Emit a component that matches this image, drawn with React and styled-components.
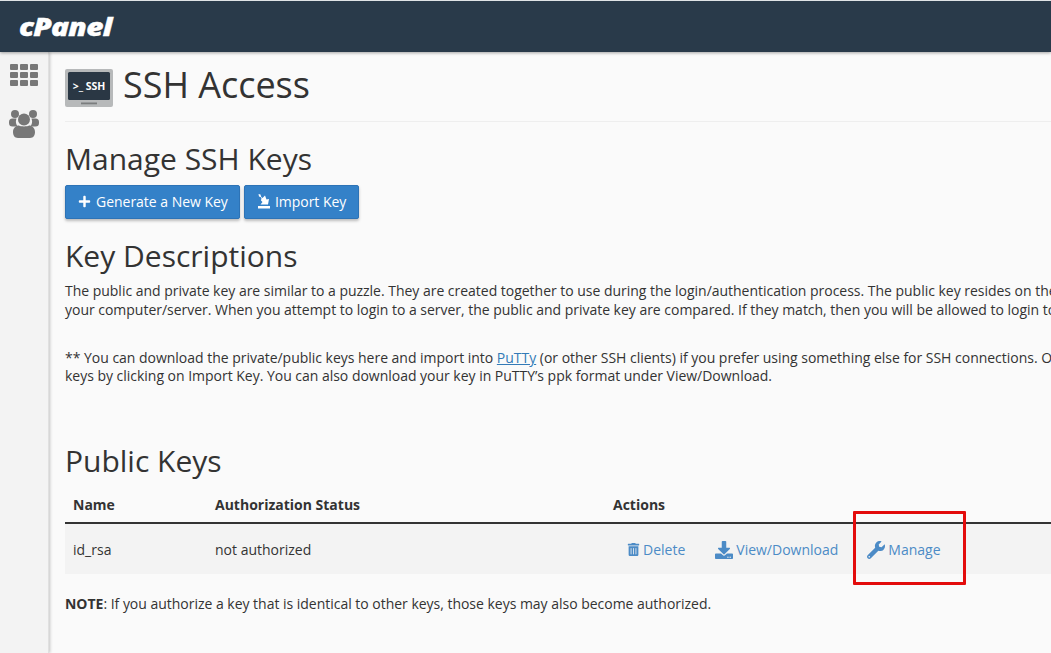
import React from "react";
import styled, { createGlobalStyle } from "styled-components";
import { FaPlus, FaTrashAlt, FaDownload, FaWrench } from "react-icons/fa";

const Global = createGlobalStyle`
  html, body { margin: 0; padding: 0; height: 100%; overflow: hidden; background: #fafafa; }
  body { font-family: "Open Sans", "Liberation Sans", sans-serif; color: #333; font-size: 14px; }
  #root { height: 100%; }
`;

const Page = styled.div`
  width: 1051px; height: 653px; display: flex; flex-direction: column; overflow: hidden; background: #fafafa;
`;
const TopBar = styled.header`
  height: 51px; flex: none; display: flex; align-items: center; padding-left: 19px;
  background: #293a4a; border-top: 1px solid #dfe3e6;
  box-shadow: 0 1px 3px rgba(0,0,0,.35); position: relative; z-index: 2;
`;
const Logo = styled.span`
  display: inline-block; transform: scaleX(1.24); transform-origin: left center;
  font-family: "Open Sans", sans-serif; font-style: italic; font-weight: 800; font-size: 24px;
  letter-spacing: -0.6px; color: #fff; line-height: 1; -webkit-text-stroke: 0.4px #fff;
`;
const Body = styled.div`display: flex; flex: 1; min-height: 0;`;
const Sidebar = styled.nav`
  width: 49px; flex: none; background: #f3f3f3; border-right: 1px solid #e0e0e0;
  box-shadow: 1px 0 3px rgba(0,0,0,.22); display: flex; flex-direction: column; align-items: center;
  padding: 12px 0 0 0; gap: 24px; box-sizing: border-box;
`;
const Main = styled.main`flex: 1; min-width: 0; padding: 17px 0 0 16px; overflow: hidden; position: relative;`;
const Title = styled.div`
  display: flex; align-items: flex-start; gap: 10px; height: 52px; border-bottom: 1px solid #eee;
`;
const TitleText = styled.h1`
  margin: -4px 0 0; font-weight: 400; font-size: 36px; line-height: 40px; color: #333; letter-spacing: -0.03px;
`;
const Section = styled.h2`
  margin: ${p => p.$top}px 0 0; font-weight: 400; font-size: 30px; line-height: 34px; color: #333;
  white-space: nowrap;
`;
const Buttons = styled.div`display: flex; gap: 4px; margin-top: 9px;`;
const Button = styled.button`
  height: 34px; display: inline-flex; align-items: center; gap: ${p => p.$gap}px;
  padding: 0 ${p => p.$right}px 2px 12px;
  background: #3481c8; border: 1px solid #2d73b6; border-radius: 2px; color: #fff;
  font: 400 14px "Open Sans", sans-serif; letter-spacing: -0.02px;
  box-shadow: 0 2px 3px rgba(0,0,0,.25);
`;
const Para = styled.p`
  margin: ${p => p.$top}px 0 0; font-size: 14px; line-height: 19px; white-space: nowrap; color: #333;
  letter-spacing: -0.02px;
`;
const TextLink = styled.a`color: #337ab7; text-decoration: underline;`;
const Table = styled.div`width: 986px; margin-top: 7px;`;
const HeadRow = styled.div`
  display: grid; grid-template-columns: 142px 398px 1fr; align-items: center; padding: 2px 0 0 8px;
  height: 35px; font-weight: 700; border-bottom: 2px solid #333;
`;
const DataRow = styled.div`
  display: grid; grid-template-columns: 142px 398px 1fr; align-items: center; padding: 1px 0 0 8px;
  height: 50px; box-sizing: border-box; background: #f3f3f3;
`;
const Actions = styled.div`display: flex; align-items: center; padding-left: 14px;`;
const Action = styled.a`
  color: #4c8bc6; display: inline-flex; align-items: center; gap: 3px; white-space: nowrap;
  margin-right: ${p => p.$gap}px;
`;
const Note = styled.p`margin: 20px 0 0; font-size: 14px; line-height: 19px; letter-spacing: -0.02px;`;
const Highlight = styled.div`
  position: absolute; left: 804px; top: 459px; width: 113px; height: 74px; box-sizing: border-box;
  border: 3px solid #e30c0c; border-radius: 1px; pointer-events: none;
`;

const SshIcon = () => (
  <svg width="48" height="38" viewBox="0 0 48 38" style={{ flex: "none" }}>
    <rect width="48" height="38" rx="2" fill="#b7b9ba" />
    <rect x="3" y="3" width="42" height="28" rx="1.5" fill="#2a3744" />
    <rect x="16" y="33.500" width="16" height="1.8" fill="#7b7d7e" />
    <text x="24" y="21" textAnchor="middle" fill="#fff" fontFamily="Open Sans" fontWeight="700" fontSize="10.500">{">_ SSH"}</text>
  </svg>
);
const GridIcon = () => (
  <svg width="28" height="22" viewBox="0 0 28 22" fill="#777">
    {[0, 8, 16].flatMap(y => [0, 10, 20].map(x => (
      <rect key={`${x}-${y}`} x={x} y={y} width="8" height="6" rx="1" />
    )))}
  </svg>
);
const UsersIcon = () => (
  <svg width="30" height="28" viewBox="0 0 30 28" fill="#777">
    <circle cx="6" cy="4" r="4" />
    <circle cx="24" cy="4" r="4" />
    <path d="M0 12a3.500 3.500 0 0 1 3.500-3.500h4a9 9 0 0 0 1 8H3.500A3.500 3.500 0 0 1 0 13zM30 12a3.500 3.500 0 0 0-3.500-3.500h-4a9 9 0 0 1-1 8h5A3.500 3.500 0 0 0 30 13z" />
    <circle cx="15" cy="9.500" r="6" />
    <path d="M4 22c0-4 3-6.500 6-6.500 1.500 1.200 8.500 1.200 10 0 3 0 6 2.500 6 6.500 0 3-1.500 6-5 6H9c-3.500 0-5-3-5-6z" />
  </svg>
);
const ImportIcon = () => (
  <svg width="14" height="15" viewBox="0 0 14 15" fill="#fff">
    <rect x="1" y="12" width="12" height="2.500" />
    <path d="M1.500 0l2 .5.500 2 1.500 1.500L8 1.500l1.500 4L12 5l-1 5.500H3.500L5.500 8 4 6.500l.5-2.500-1-1L2 2.500z" />
  </svg>
);

export default function App() {
  return (
    <Page>
      <Global />
      <TopBar><Logo>cPanel</Logo></TopBar>
      <Body>
        <Sidebar>
          <GridIcon />
          <UsersIcon />
        </Sidebar>
        <Main>
          <Title><SshIcon /><TitleText>SSH Access</TitleText></Title>
          <Section $top={20}>Manage SSH Keys</Section>
          <Buttons>
            <Button $gap={5} $right={11}><FaPlus size={13} />Generate a New Key</Button>
            <Button $gap={4} $right={12}><ImportIcon />Import Key</Button>
          </Buttons>
          <Section $top={20}>Key Descriptions</Section>
          <Para $top={8}>The public and private key are similar to a puzzle. They are created together to use during the login/authentication process. The public key resides on the server</Para>
          <Para $top={0}>your computer/server. When you attempt to login to a server, the public and private key are compared. If they match, then you will be allowed to login to the</Para>
          <Para $top={29}>** You can download the private/public keys here and import into <TextLink>PuTTy</TextLink> (or other SSH clients) if you prefer using something else for SSH connections. Or</Para>
          <Para $top={-1}>keys by clicking on Import Key. You can also download your key in PuTTY’s ppk format under View/Download.</Para>
          <Section $top={59}>Public Keys</Section>
          <Table>
            <HeadRow><span>Name</span><span>Authorization Status</span><span>Actions</span></HeadRow>
            <DataRow>
              <span>id_rsa</span>
              <span>not authorized</span>
              <Actions>
                <Action $gap={30}><FaTrashAlt size={13} />Delete</Action>
                <Action $gap={29}><FaDownload size={18} />View/Download</Action>
                <Action $gap={0}><FaWrench size={18} />Manage</Action>
              </Actions>
            </DataRow>
          </Table>
          <Note><b>NOTE</b>: If you authorize a key that is identical to other keys, those keys may also become authorized.</Note>
          <Highlight />
        </Main>
      </Body>
    </Page>
  );
}
